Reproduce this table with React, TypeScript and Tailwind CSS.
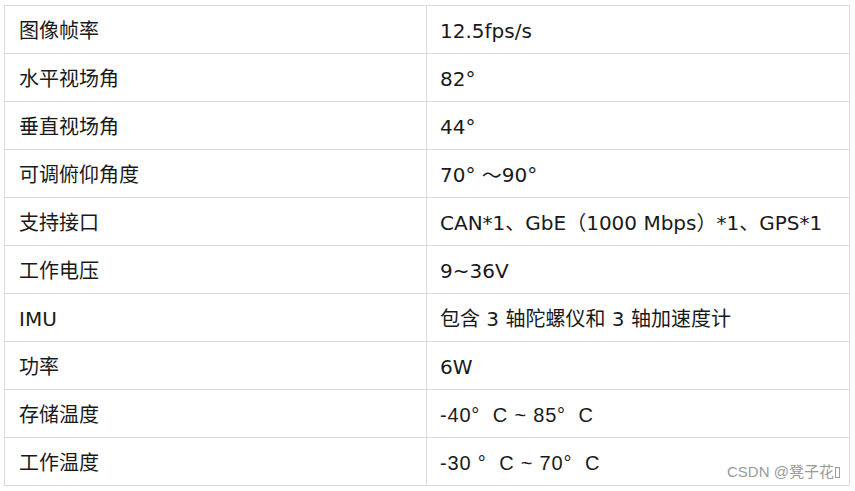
const rows: { k: string; v: React.ReactNode; arial?: boolean }[] = [
  { k: '图像帧率', v: '12.5fps/s' },
  { k: '水平视场角', v: '82°' },
  { k: '垂直视场角', v: '44°' },
  { k: '可调俯仰角度', v: <>70° <span className="font-['Noto_Sans_CJK_SC']">～</span>90°</> },
  { k: '支持接口', v: 'CAN*1、GbE（1000 Mbps）*1、GPS*1' },
  { k: '工作电压', v: '9~36V' },
  { k: 'IMU', v: '包含 3 轴陀螺仪和 3 轴加速度计' },
  { k: '功率', v: '6W' },
  { k: '存储温度', v: '-40°  C ~ 85°  C', arial: true },
  { k: '工作温度', v: '-30 °  C ~ 70°  C', arial: true },
];

export default function App() {
  return (
    <div className="relative min-h-[491px] bg-white pl-[4px] pt-[5px]">
      <div className="w-[846px] border border-[#dcdcdc] text-[20px] text-[#1a1a1a]">
        {rows.map((r, i) => (
          <div
            key={i}
            className="flex h-[48px] border-b border-[#dcdcdc] last:h-[47px] last:border-b-0"
          >
            <div className="flex w-[422px] items-center border-r border-[#dcdcdc] pl-[14px] pt-[3px] font-['DejaVu_Sans','Noto_Sans_CJK_SC',sans-serif]">
              {r.k}
            </div>
            <div
              className={
                r.arial
                  ? "flex flex-1 items-center whitespace-pre pl-[13px] pt-[3px] tracking-[0.8px] font-['Liberation_Sans','Noto_Sans_CJK_SC',sans-serif]"
                  : "flex flex-1 items-center whitespace-pre pl-[13px] pt-[3px] font-['DejaVu_Sans','Noto_Sans_CJK_SC',sans-serif]"
              }
            >
              {r.v}
            </div>
          </div>
        ))}
      </div>
      <div className="absolute left-[727px] top-[461px] font-['Liberation_Sans','Noto_Sans_CJK_SC',sans-serif] text-[15px] text-[#9a9a9a]">
        CSDN @凳子花
        <span className="ml-[1px] inline-block h-[11px] w-[5px] border border-[#9a9a9a] align-[-1px]" />
      </div>
    </div>
  );
}
